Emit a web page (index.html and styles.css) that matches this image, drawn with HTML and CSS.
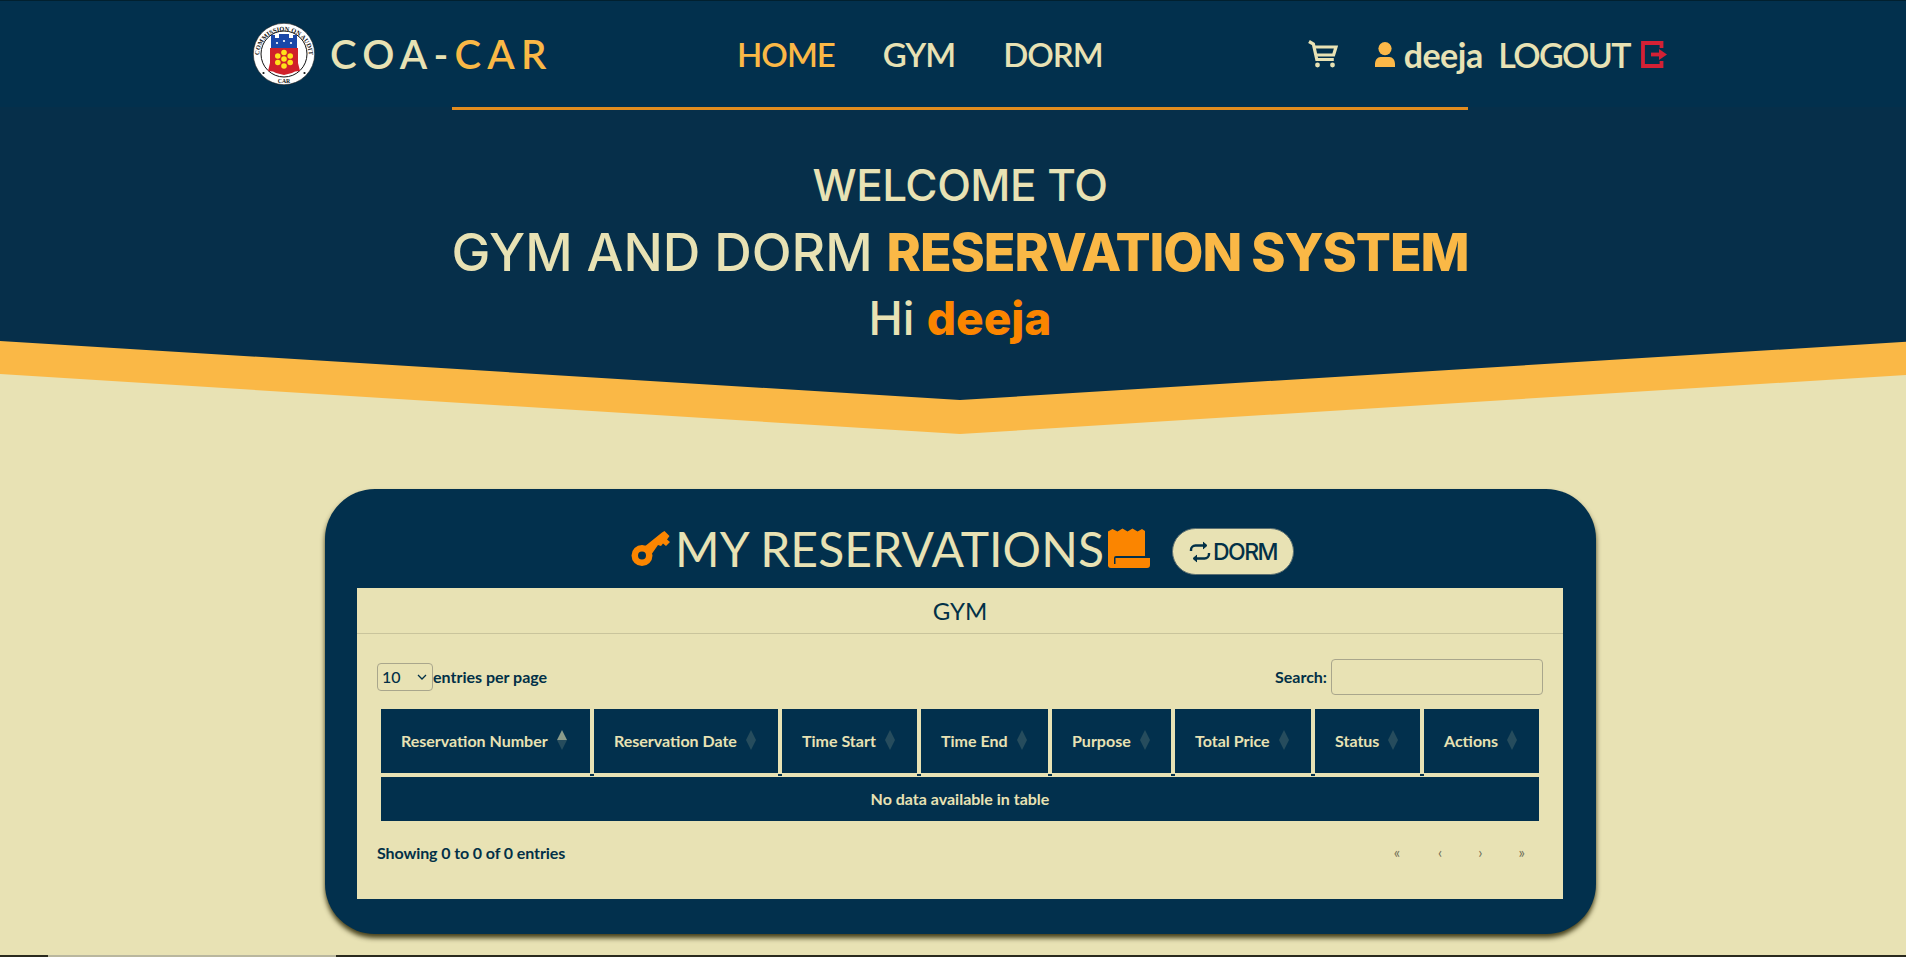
FILE: index.html
```html
<!DOCTYPE html>
<html lang="en">
<head>
<meta charset="utf-8">
<title>COA-CAR</title>
<link rel="stylesheet" href="styles.css">
</head>
<body>
<div class="page">
  <div class="hero-band">
    <header class="hero">
      <nav class="nav">
        <a class="brand" href="#">
          <svg class="seal" viewBox="0 0 62 62">
            <defs><path id="sealArc" d="M6.500 38 A25 25 0 1 1 55.500 38"/></defs>
            <circle cx="31" cy="31" r="30.700" fill="#fff" stroke="#222" stroke-width=".6"/>
            <circle cx="31" cy="31" r="23" fill="none" stroke="#111" stroke-width="1"/>
            <text class="seal-text"><textPath href="#sealArc" startOffset="50%" text-anchor="middle">COMMISSION ON AUDIT</textPath></text>
            <text class="seal-car" x="31" y="60" text-anchor="middle">CAR</text>
            <circle cx="10.500" cy="50" r="1.100" fill="#111"/><circle cx="51.500" cy="50" r="1.100" fill="#111"/>
            <path d="M18 25V12h4v3h4v-4h10v4h4v-3h4v13z" fill="#1a47a8"/>
            <path d="M17 25h28v15l2 8-5 .5-3 1.500-8 2-8-2-3-1.500-5-.5 2-8z" fill="#d0202a"/>
            <g fill="#ffe21a"><circle cx="31" cy="29.500" r="2.800"/><circle cx="24.800" cy="33" r="2.800"/><circle cx="37.200" cy="33" r="2.800"/><circle cx="31" cy="36" r="2.800"/><circle cx="24.800" cy="39.500" r="2.800"/><circle cx="37.200" cy="39.500" r="2.800"/><circle cx="31" cy="43" r="2.800"/></g>
            <g fill="#fff"><circle cx="24" cy="20" r="1.100"/><circle cx="31" cy="18" r="1.100"/><circle cx="38" cy="20" r="1.100"/></g>
          </svg>
          <span class="brand-name">COA-<span class="brand-accent">CAR</span></span>
        </a>
        <ul class="nav-links">
          <li><a class="nav-link is-active" href="#">HOME</a></li>
          <li><a class="nav-link" href="#">GYM</a></li>
          <li><a class="nav-link" href="#">DORM</a></li>
        </ul>
        <div class="nav-actions">
          <svg class="icon-cart" viewBox="0 0 30 28" fill="none" stroke="#e8e2b4" stroke-width="3.200">
            <path d="M1 1.500l4.400 2.600 3.400 15.400h17"/>
            <path d="M6.200 7h21.800l-2.400 8H8.200"/>
            <circle cx="9.500" cy="25" r="1.600" fill="#e8e2b4" stroke-width="1.600"/>
            <circle cx="24.500" cy="25" r="1.600" fill="#e8e2b4" stroke-width="1.600"/>
          </svg>
          <svg class="icon-user" viewBox="0 0 20 25" fill="#fcb848">
            <circle cx="10" cy="6.600" r="6.600"/>
            <path d="M5.500 15h9c3 0 5.500 3 5.500 7.200V25H0v-2.800C0 18 2.500 15 5.500 15z"/>
          </svg>
          <span class="user-name">deeja</span>
          <a class="logout" href="#">LOGOUT</a>
          <svg class="icon-logout" viewBox="0 0 26 27" fill="none" stroke="#d32135" stroke-width="3.800">
            <path d="M20.500 7V2H2v23h18.500v-5"/>
            <path d="M10 13.500h10"/>
            <path d="M18 8L26 13.500l-8 5.500z" fill="#d32135" stroke="none"/>
          </svg>
        </div>
      </nav>
      <div class="nav-rule"></div>
      <div class="hero-copy">
        <h2 class="hero-welcome">WELCOME TO</h2>
        <h1 class="hero-title">GYM AND DORM <strong class="hero-strong">RESERVATION SYSTEM</strong></h1>
        <p class="hero-hi">Hi <strong class="hero-name">deeja</strong></p>
      </div>
    </header>
  </div>

  <main class="content">
    <section class="panel">
      <div class="panel-head">
        <svg class="icon-key" viewBox="0 0 39 36" fill="#fb8500">
          <path fill-rule="evenodd" d="M11 14a10.500 10.500 0 1 1 0 21 10.500 10.500 0 1 1 0-21zM11 20.500a4 4 0 1 0 0 8 4 4 0 1 0 0-8z"/>
          <path d="M13 16L31 1.500 33.500 0 38.500 5 36 8.500 39 11 35 15 32 12.500 30 15 27 14 20 24z"/>
        </svg>
        <h2 class="panel-title">MY RESERVATIONS</h2>
        <svg class="icon-scroll" viewBox="0 0 42 40" fill="#fb8500">
          <path d="M0 37V3.500l4.500-2.500 5 2.500 5-3 5 3 5-3 5 3 4.500-2.500 3 2V28H8a2 2 0 0 0-2 2v8H0z"/>
          <path d="M7.500 30H42v7a3 3 0 0 1-3 3H3a3 3 0 0 1-3-3v-1h7.500z"/>
        </svg>
        <button class="swap-btn" type="button">
          <svg class="icon-repeat" viewBox="0 0 22 22" fill="none" stroke="#023047" stroke-width="2.400">
            <path d="M2 10V9c0-2.500 2-4.500 4.500-4.500H17"/>
            <path d="M14 1l4 3.500L14 8" fill="#023047" stroke-width="1"/>
            <path d="M20 12v1c0 2.500-2 4.500-4.500 4.500H5"/>
            <path d="M8 14l-4 3.500L8 21" fill="#023047" stroke-width="1"/>
          </svg>
          DORM
        </button>
      </div>

      <div class="sheet">
        <div class="sheet-head">GYM</div>
        <div class="sheet-body">
          <div class="dt-top">
            <label class="dt-length">
              <span class="select-wrap">
                <select class="dt-select"><option>10</option><option>25</option><option>50</option></select>
                <svg class="select-arrow" viewBox="0 0 10 6" fill="none" stroke="#023047" stroke-width="1.300"><path d="M1 1l4 4 4-4"/></svg>
              </span>
              <span class="dt-label">entries per page</span>
            </label>
            <label class="dt-search"><span class="dt-label">Search:</span> <input class="dt-input" type="search"></label>
          </div>

          <table class="dt-table">
            <thead>
              <tr>
                <th class="col-1"><span class="th-text">Reservation Number</span><span class="sort sort-asc"></span></th>
                <th class="col-2"><span class="th-text">Reservation Date</span><span class="sort"></span></th>
                <th class="col-3"><span class="th-text">Time Start</span><span class="sort"></span></th>
                <th class="col-4"><span class="th-text">Time End</span><span class="sort"></span></th>
                <th class="col-5"><span class="th-text">Purpose</span><span class="sort"></span></th>
                <th class="col-6"><span class="th-text">Total Price</span><span class="sort"></span></th>
                <th class="col-7"><span class="th-text">Status</span><span class="sort"></span></th>
                <th class="col-8"><span class="th-text">Actions</span><span class="sort"></span></th>
              </tr>
            </thead>
            <tbody>
              <tr><td class="dt-empty" colspan="8">No data available in table</td></tr>
            </tbody>
          </table>

          <div class="dt-bottom">
            <div class="dt-info">Showing 0 to 0 of 0 entries</div>
            <div class="dt-pager">
              <span class="page-btn page-first">«</span>
              <span class="page-btn">‹</span>
              <span class="page-btn">›</span>
              <span class="page-btn">»</span>
            </div>
          </div>
        </div>
      </div>
    </section>
  </main>

  <div class="next-edge">
    <span class="edge-dark edge-a"></span>
    <span class="edge-light"></span>
    <span class="edge-dark edge-b"></span>
  </div>
</div>
</body>
</html>
```

FILE: styles.css
```css
* { box-sizing: border-box; }
html, body { margin: 0; padding: 0; overflow: hidden; background: #e8e2b4; }
.page { width: 1920px; height: 957px; display: flex; flex-direction: column; font-family: "Lato", sans-serif; color: #023047; background: #e8e2b4; }
a { color: inherit; text-decoration: none; }
h1, h2, p, ul { margin: 0; padding: 0; }

.hero-band { height: 434px; background: #fab846; clip-path: polygon(0 0, 100% 0, 100% 374px, 50% 100%, 0 374px); }
.hero { height: 400px; background: #062f4a; clip-path: polygon(0 0, 100% 0, 100% 341px, 50% 100%, 0 341px); }

.nav { height: 107px; display: flex; align-items: center; padding: 0 253px 0 253px; background: #02304d; border-top: 1px solid #01202f; }
.brand { width: 484px; display: flex; align-items: center; gap: 15px; }
.seal { width: 62px; height: 62px; flex: none; }
.seal-text { font: 700 6.400px "Liberation Serif", serif; fill: #111; }
.seal-car { font: 700 5.800px "Liberation Serif", serif; fill: #111; }
.brand-name { font-size: 40px; font-weight: 600; letter-spacing: 6.200px; color: #e8e2b4; white-space: nowrap; }
.brand-accent { color: #fab846; }
.nav-links { display: flex; gap: 48px; list-style: none; }
.nav-link { font-size: 33px; font-weight: 600; color: #e8e2b4; letter-spacing: -1px; }
.nav-link.is-active { color: #fab846; }
.nav-actions { margin-left: auto; display: flex; align-items: center; }
.icon-cart { width: 30px; height: 28px; margin-right: 37px; }
.icon-user { width: 20px; height: 25px; margin-right: 9px; }
.user-name { font-size: 34px; font-weight: 700; color: #e8e2b4; margin-right: 15.500px; letter-spacing: -0.5px; }
.logout { font-size: 34px; font-weight: 600; color: #e8e2b4; letter-spacing: -1.600px; margin-right: 11px; }
.icon-logout { width: 26px; height: 27px; }
.nav-rule { width: 1016px; height: 3px; margin: 0 auto; background: #e28c1f; }

.hero-copy { text-align: center; font-family: "Inter", sans-serif; color: #e8e2b4; padding-top: 47px; }
.hero-welcome { font-size: 44px; line-height: 56px; font-weight: 500; letter-spacing: -0.5px; }
.hero-title { font-size: 52px; line-height: 64px; font-weight: 500; margin-top: 8px; white-space: nowrap; }
.hero-strong { font-weight: 800; color: #fab846; letter-spacing: -1.100px; }
.hero-hi { font-size: 46px; line-height: 54px; font-weight: 500; margin-top: 6px; }
.hero-name { font-weight: 800; color: #fb8500; }

.content { flex: 1; padding-top: 55px; }
.panel { width: 1271px; height: 444.500px; margin: 0 auto; padding: 36px 32.500px 0; background: #02304d; border-radius: 50px; box-shadow: 0 4px 5px rgba(40, 35, 0, .85); }
.panel-head { height: 63px; display: flex; justify-content: center; align-items: flex-start; padding-left: 5px; }
.icon-key { width: 39px; height: 36px; margin: 6px 5px 0 0; }
.panel-title { font-size: 48px; line-height: 48px; font-weight: 400; color: #e8e2b4; letter-spacing: 0.1px; white-space: nowrap; }
.icon-scroll { width: 42px; height: 40px; margin: 3px 22px 0 4px; }
.swap-btn { width: 122px; height: 47px; margin-top: 3px; display: flex; align-items: center; justify-content: center; gap: 2px; background: #e8e2b4; border: 1px solid #5c6f70; border-radius: 24px; color: #023047; font: 500 23px "Inter", sans-serif; letter-spacing: -1.500px; padding: 0; }
.icon-repeat { width: 22px; height: 22px; }

.sheet { height: 311px; background: #e8e2b4; }
.sheet-head { height: 46px; display: flex; align-items: center; justify-content: center; font-size: 24px; color: #023047; border-bottom: 1px solid #c9c49c; }
.sheet-body { padding: 25px 20px 0; font-size: 16px; font-weight: 700; }

.dt-top { height: 36px; display: flex; align-items: center; justify-content: space-between; }
.dt-length { display: flex; align-items: center; }
.dt-label { padding-bottom: 2px; }
.select-wrap { position: relative; display: block; width: 56px; height: 28px; }
.dt-select { width: 100%; height: 100%; appearance: none; background: transparent; border: 1px solid #a9a68c; border-radius: 4px; padding: 0 0 2px 4px; font: 500 16px "Lato", sans-serif; color: #023047; }
.select-arrow { position: absolute; right: 6px; top: 11px; width: 10px; height: 6px; }
.dt-search { display: flex; align-items: center; gap: 4px; }
.dt-input { width: 212px; height: 36px; background: transparent; border: 1px solid #a9a68c; border-radius: 4px; }

.dt-table { width: 1166px; margin-top: 10px; border-collapse: separate; border-spacing: 4px; table-layout: fixed; }
.col-1 { width: 209px; } .col-2 { width: 184px; } .col-3 { width: 135px; } .col-4 { width: 127px; }
.col-5 { width: 119px; } .col-6 { width: 136px; } .col-7 { width: 105px; } .col-8 { width: 115px; }
.dt-table th { position: relative; height: 64px; padding: 0 0 0 20px; background: #02304d; color: #e8e2b4; text-align: left; font-weight: 700; font-size: 16px; white-space: nowrap; }
.dt-table th::after { content: ""; position: absolute; right: -4px; bottom: -3px; width: 4px; height: 2px; background: #02304d; }
.dt-table th:last-child::after { display: none; }
.th-text { display: inline-block; vertical-align: middle; padding-bottom: 2px; }
.sort { display: inline-block; vertical-align: middle; position: relative; width: 11px; height: 20px; margin-left: 9px; margin-bottom: 2px; }
.sort::before, .sort::after { content: ""; position: absolute; left: 0; border-left: 5.500px solid transparent; border-right: 5.500px solid transparent; opacity: .16; }
.sort::before { top: 0; border-bottom: 10px solid #e8e2b4; }
.sort::after { bottom: 0; border-top: 10px solid #e8e2b4; }
.sort-asc::before { opacity: .6; }
.dt-empty { height: 44px; padding: 0 0 2px; background: #02304d; color: #e8e2b4; text-align: center; font-weight: 700; font-size: 16px; }

.dt-bottom { display: flex; justify-content: space-between; align-items: center; height: 24px; margin-top: 15px; }
.dt-info { letter-spacing: -0.1px; }
.dt-pager { display: flex; font-weight: 400; font-size: 15px; color: #6f6d55; }
.page-btn { padding: 0 18px; }
.page-first { padding-right: 20px; }

.next-edge { height: 2px; display: flex; flex: none; }
.edge-dark { background: #2a2a1e; }
.edge-a { width: 48px; }
.edge-light { width: 288px; background: #b9b79e; }
.edge-b { flex: 1; }
```
